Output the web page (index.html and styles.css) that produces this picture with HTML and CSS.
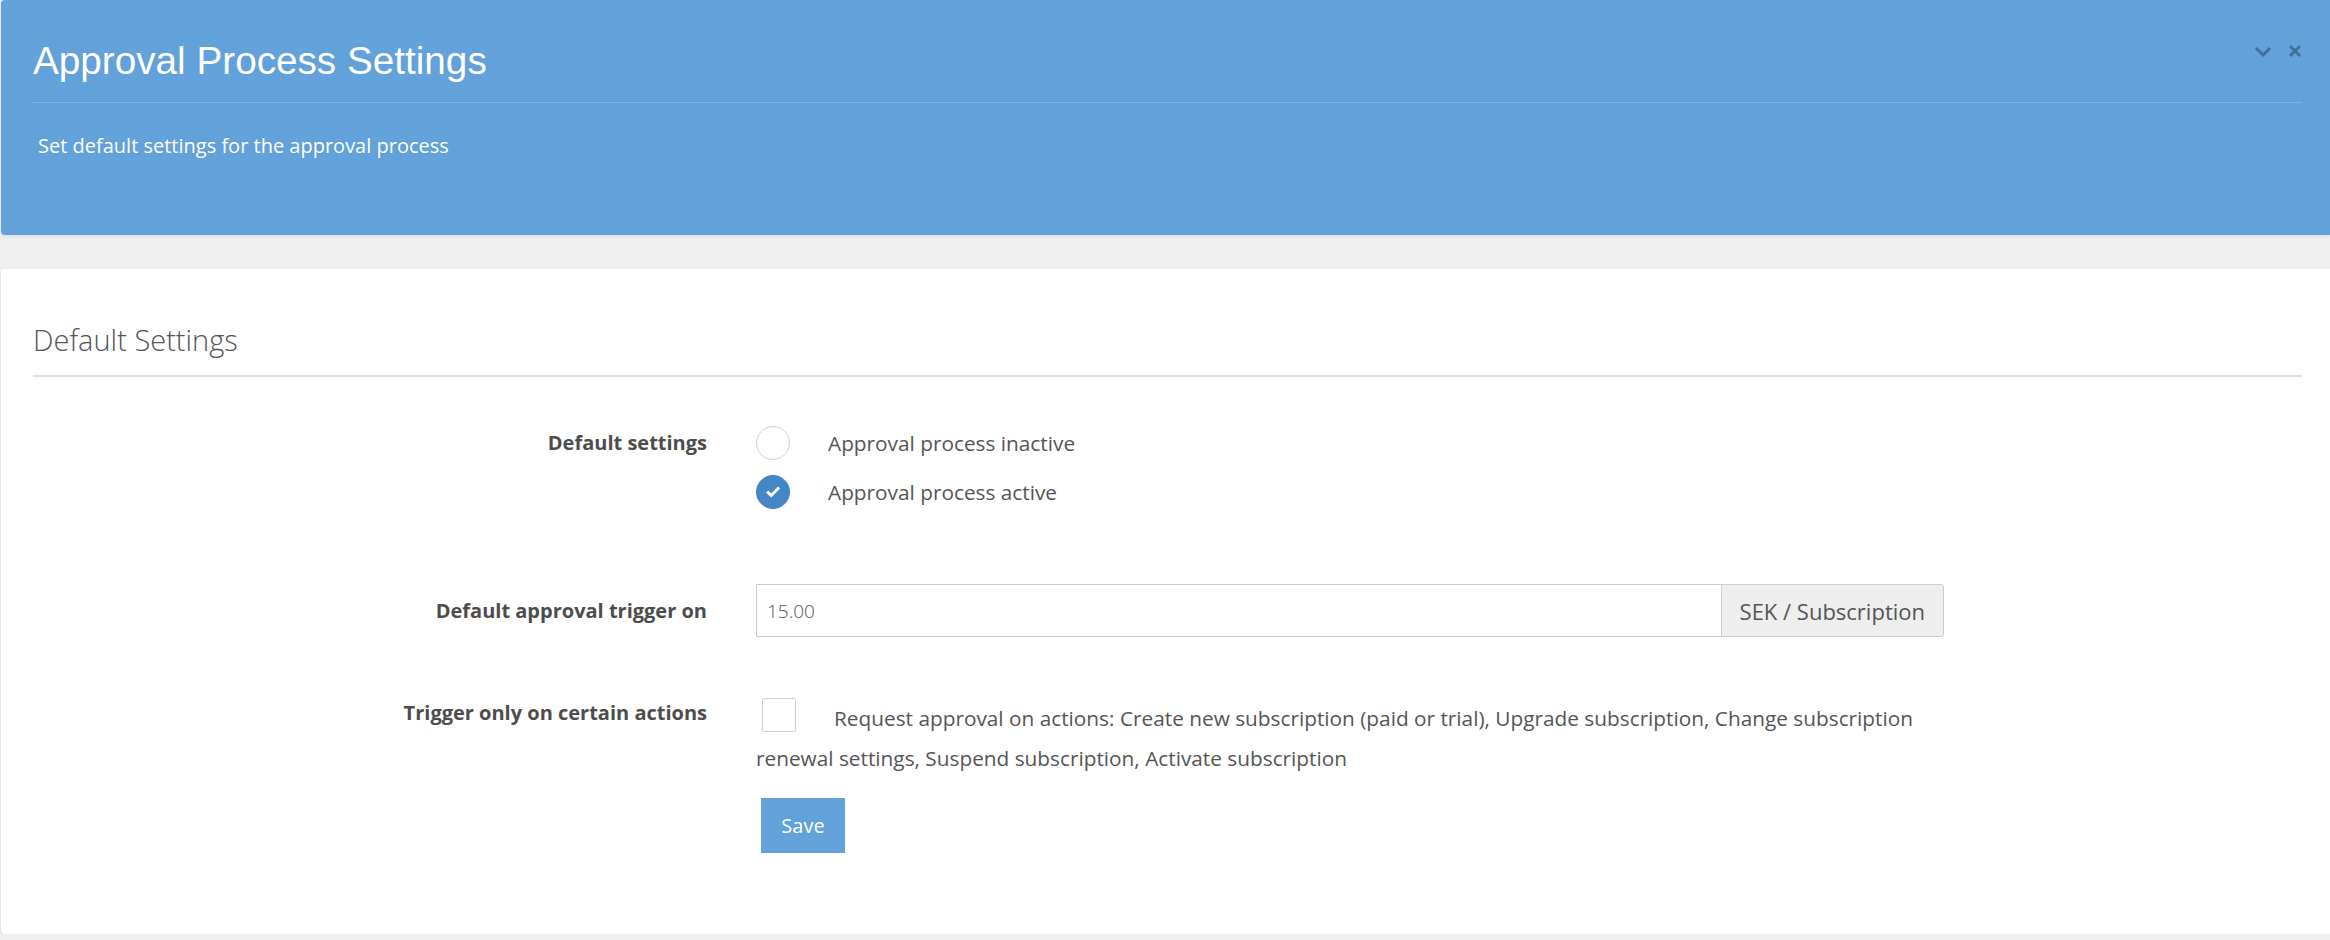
FILE: index.html
```html
<!DOCTYPE html>
<html lang="en">
<head>
    <meta charset="UTF-8">
    <title>Approval Process Settings</title>
    <link rel="stylesheet" href="styles.css">
</head>
<body>
    <div class="page">
        <!-- Top banner -->
        <section class="hero">
            <div class="hero-head">
                <h1>Approval Process Settings</h1>
                <div class="tools">
                    <svg class="tool-chevron" width="18" height="11" viewBox="0 0 18 11">
                        <path d="M2 2 L9 9 L16 2" fill="none" stroke="currentColor" stroke-width="3"/>
                    </svg>
                    <svg class="tool-close" width="14" height="14" viewBox="0 0 14 14">
                        <path d="M2 2 L12 12 M12 2 L2 12" fill="none" stroke="currentColor" stroke-width="3"/>
                    </svg>
                </div>
            </div>
            <p class="hero-sub">Set default settings for the approval process</p>
        </section>

        <!-- Settings card -->
        <section class="card">
            <h2 class="card-title">Default Settings</h2>
            <form class="settings-form" onsubmit="return false">
                <div class="form-row">
                    <div class="row-label label-radio">Default settings</div>
                    <div class="row-control">
                        <label class="option">
                            <span class="radio"></span>
                            <span class="option-text">Approval process inactive</span>
                        </label>
                        <label class="option">
                            <span class="radio checked">
                                <svg width="16" height="13" viewBox="0 0 16 13">
                                    <path d="M2 6.5 L6.2 10.5 L14 2.5" fill="none" stroke="#fff" stroke-width="3"/>
                                </svg>
                            </span>
                            <span class="option-text">Approval process active</span>
                        </label>
                    </div>
                </div>

                <div class="form-row row-trigger">
                    <div class="row-label label-input">Default approval trigger on</div>
                    <div class="row-control">
                        <div class="input-group">
                            <input type="text" class="amount" value="15.00">
                            <span class="addon">SEK / Subscription</span>
                        </div>
                    </div>
                </div>

                <div class="form-row row-actions">
                    <div class="row-label label-check">Trigger only on certain actions</div>
                    <div class="row-control">
                        <p class="check-line"><span class="checkbox"></span>Request approval on actions: Create new subscription (paid or trial), Upgrade subscription, Change subscription renewal settings, Suspend subscription, Activate subscription</p>
                        <button class="save-btn">Save</button>
                    </div>
                </div>
            </form>
        </section>
    </div>
</body>
</html>
```

FILE: styles.css
```css
body {
    margin: 0;
    background-color: #efefef;
    font-family: "Open Sans", "Liberation Sans", sans-serif;
    color: #555;
}
.page {
    padding-left: 1px;
}
.hero {
    background-color: #62a1da;
    color: white;
    padding: 38px 28px 75px 32px;
    border-radius: 4px 0 0 4px;
    box-shadow: 0 2px 3px rgba(0, 0, 0, 0.07);
}
.hero-head {
    display: flex;
    justify-content: space-between;
    align-items: flex-start;
    padding-bottom: 19px;
    border-bottom: 1px solid #7fb3e3;
}
.hero-head h1 {
    margin: 0;
    font-family: "Liberation Sans", Arial, sans-serif;
    font-weight: normal;
    font-size: 38.7px;
    line-height: 45px;
}
.tools {
    display: flex;
    align-items: center;
    gap: 16px;
    margin-top: 6px;
    height: 14px;
    color: #41709b;
}
.hero-sub {
    margin: 29px 0 0 5px;
    font-size: 20px;
    line-height: 28px;
}
.card {
    margin-top: 34px;
    background-color: white;
    padding: 53px 28px 81px 32px;
    border-radius: 4px 0 0 4px;
    box-shadow: 0 2px 3px rgba(0, 0, 0, 0.1);
}
.card-title {
    margin: 0;
    font-size: 29px;
    font-weight: 300;
    line-height: 36px;
    padding-bottom: 17px;
    border-bottom: 2px solid #e0e0e0;
    color: #555;
}
.settings-form {
    margin-top: 41px;
}
.form-row {
    display: flex;
}
.row-trigger {
    margin-top: 68px;
}
.row-actions {
    margin-top: 61px;
}
.row-label {
    width: 674px;
    flex-shrink: 0;
    text-align: right;
    font-weight: 700;
    font-size: 20px;
    color: #4d4d4d;
}
.label-radio {
    line-height: 49px;
}
.label-input {
    line-height: 53px;
}
.label-check {
    line-height: 30px;
}
.row-control {
    margin-left: 49px;
    width: 1188px;
}
.option {
    display: flex;
    align-items: center;
    height: 49px;
    font-size: 20.8px;
}
.radio {
    width: 32px;
    height: 32px;
    border: 1.5px solid #d3d1cc;
    border-radius: 50%;
    margin-right: 38px;
    display: flex;
    align-items: center;
    justify-content: center;
}
.radio.checked {
    background-color: #4486c6;
    border-color: #4486c6;
}
.input-group {
    display: flex;
    height: 53px;
}
.amount {
    flex: 1;
    border: 1px solid #ccc;
    border-right: none;
    padding: 0 10px;
    font-family: "Open Sans", sans-serif;
    font-size: 19px;
    font-weight: 300;
    color: #555;
    outline: none;
}
.addon {
    display: flex;
    align-items: center;
    padding: 0 18px;
    background-color: #eee;
    border: 1px solid #ccc;
    border-radius: 0 3px 3px 0;
    font-size: 22px;
    color: #555;
}
.check-line {
    margin: 0;
    font-size: 20.8px;
    line-height: 40px;
}
.checkbox {
    display: inline-block;
    vertical-align: top;
    width: 32px;
    height: 32px;
    border: 1.5px solid #d3d1cc;
    border-radius: 2px;
    margin: 0 38px 0 6px;
}
.save-btn {
    margin: 20px 0 0 5px;
    width: 84px;
    height: 55px;
    border: none;
    background-color: #62a1da;
    color: white;
    font-family: "Open Sans", sans-serif;
    font-size: 20px;
}
```
